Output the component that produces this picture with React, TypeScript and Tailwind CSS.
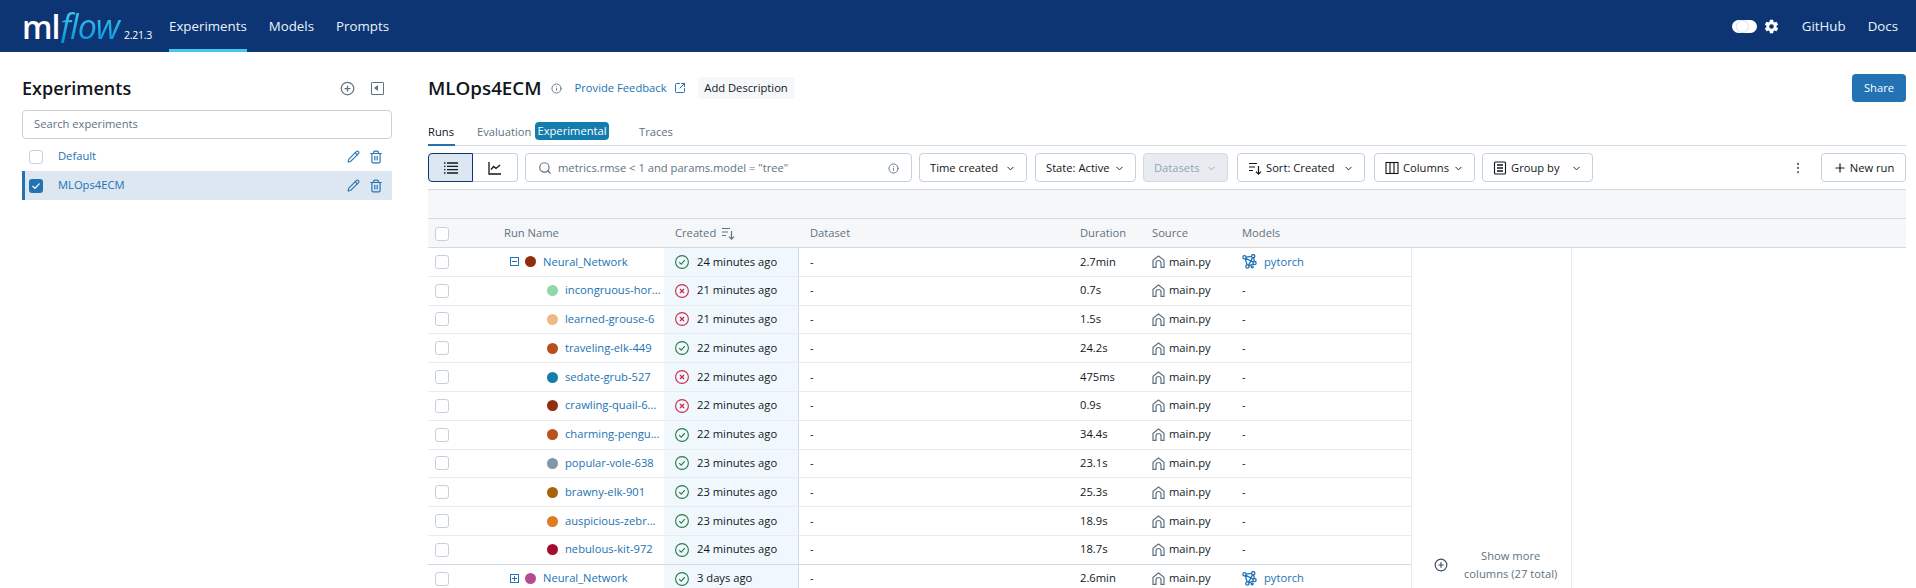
import { ChevronDown, CirclePlus, Info, MoreVertical, Pencil, Plus, Search, SquareArrowOutUpRight, Trash2 } from "lucide-react";
import { IoSettingsSharp } from "react-icons/io5";

interface Run {
  name: string;
  color: string;
  created: string;
  ok: boolean;
  duration: string;
  parent?: "open" | "closed";
  last?: boolean;
}

const runs: Run[] = [
  { name: "Neural_Network", color: "#8f2f0e", created: "24 minutes ago", ok: true, duration: "2.7min", parent: "open" },
  { name: "incongruous-hor...", color: "#8fd9a8", created: "21 minutes ago", ok: false, duration: "0.7s" },
  { name: "learned-grouse-6", color: "#efb985", created: "21 minutes ago", ok: false, duration: "1.5s" },
  { name: "traveling-elk-449", color: "#b9501c", created: "22 minutes ago", ok: true, duration: "24.2s" },
  { name: "sedate-grub-527", color: "#137dae", created: "22 minutes ago", ok: false, duration: "475ms" },
  { name: "crawling-quail-6...", color: "#8f2f0e", created: "22 minutes ago", ok: false, duration: "0.9s" },
  { name: "charming-pengu...", color: "#be501e", created: "22 minutes ago", ok: true, duration: "34.4s" },
  { name: "popular-vole-638", color: "#8396a7", created: "23 minutes ago", ok: true, duration: "23.1s" },
  { name: "brawny-elk-901", color: "#a6630c", created: "23 minutes ago", ok: true, duration: "25.3s" },
  { name: "auspicious-zebr...", color: "#e07b20", created: "23 minutes ago", ok: true, duration: "18.9s" },
  { name: "nebulous-kit-972", color: "#a30d32", created: "24 minutes ago", ok: true, duration: "18.7s", last: true },
  { name: "Neural_Network", color: "#b34d93", created: "3 days ago", ok: true, duration: "2.6min", parent: "closed" },
];

function Box({ className = "" }: { className?: string }) {
  return <span className={`block h-[14px] w-[14px] rounded-[3px] border border-[#c5d1dd] bg-white ${className}`} />;
}

function ListIcon() {
  return (
    <svg width="16" height="16" viewBox="0 0 16 16" fill="none" stroke="#11171c" strokeWidth="1.3">
      <path d="M4 3h11M4 6.3h11M4 9.7h11M4 13h11M1 3h1.5M1 6.3h1.5M1 9.7h1.5M1 13h1.5" />
    </svg>
  );
}

function ChartIcon() {
  return (
    <svg width="14" height="14" viewBox="0 0 14 14" fill="none" stroke="#11171c" strokeWidth="1.3">
      <path d="M1 1v12h12" />
      <path d="M3 8.5l2.7-3 2.3 2 4-3.5" />
    </svg>
  );
}

function SortIcon({ color = "#11171c" }: { color?: string }) {
  return (
    <svg width="14" height="14" viewBox="0 0 14 14" fill="none" stroke={color} strokeWidth="1.2">
      <path d="M1 2.5h8M1 6h6M1 9.5h4M10.5 5v8M8 10.6l2.5 2.5 2.5-2.5" />
    </svg>
  );
}

function ColumnsIcon() {
  return (
    <svg width="14" height="14" viewBox="0 0 14 14" fill="none" stroke="#11171c" strokeWidth="1.1">
      <rect x="1" y="1.5" width="12" height="11" />
      <path d="M5 1.5v11M9 1.5v11" />
    </svg>
  );
}

function GroupIcon() {
  return (
    <svg width="14" height="14" viewBox="0 0 14 14" fill="none" stroke="#11171c" strokeWidth="1.1">
      <rect x="1.5" y="1" width="11" height="12" rx="1" />
      <path d="M4 4h6M4 7h6M4 10h6" strokeWidth="1.5" />
    </svg>
  );
}

function HomeIcon() {
  return (
    <svg width="13" height="13" viewBox="0 0 13 13" fill="none" stroke="#5f7281" strokeWidth="1.2">
      <path d="M1 12.4V5.2L6.5 1 12 5.2v7.2H9V8a2.5 2.5 0 0 0-5 0v4.4z" />
    </svg>
  );
}

function ModelIcon() {
  return (
    <svg width="15" height="15" viewBox="0 0 14 14" fill="none" stroke="#2272b4" strokeWidth="1.2">
      <circle cx="2.3" cy="3" r="1.5" />
      <circle cx="10.5" cy="2" r="1.5" />
      <circle cx="11.7" cy="8.5" r="1.5" />
      <circle cx="5" cy="11.7" r="1.5" />
      <circle cx="9.5" cy="12" r="1" />
      <path d="M3.8 3l5.2-.8M3 4.3l1.8 6M9.9 3.4L6 10.6M10.9 3.5l.6 3.5M10.3 9.3l-4 1.8M3.5 4l6.8 3.6" />
    </svg>
  );
}

function StatusIcon({ ok }: { ok: boolean }) {
  const color = ok ? "#277c43" : "#c82d4c";
  return (
    <svg width="14" height="14" viewBox="0 0 14 14" fill="none" stroke={color} strokeWidth="1.1" className="shrink-0">
      <circle cx="7" cy="7" r="6.4" />
      {ok ? <path d="M4.2 7.2l2 1.9 3.6-3.9" /> : <path d="M5 5l4 4M9 5l-4 4" strokeWidth="1.3" />}
    </svg>
  );
}

function ToolButton({ label, width, disabled, icon }: { label: string; width: string; disabled?: boolean; icon?: React.ReactNode }) {
  return (
    <button className={`flex h-[29px] shrink-0 items-center justify-between rounded border px-[10px] pt-px ${width} ${disabled ? "border-[#d1d9e1] bg-[#e8ecf0] text-[#92a4b3]" : "border-[#c5d1dd] bg-white text-[#11171c]"}`}>
      <span className="flex items-center gap-1 whitespace-nowrap">
        {icon}
        {label}
      </span>
      <ChevronDown size={11} />
    </button>
  );
}

function RunRow({ run }: { run: Run }) {
  return (
    <div className={`flex h-[28.8px] items-center border-b ${run.last ? "border-[#d1d9e1]" : "border-[#e8ecf0]"}`}>
      <div className="w-[76px] shrink-0 pl-[7px]">
        <Box />
      </div>
      <div className="flex w-[160px] shrink-0 items-center">
        {run.parent ? (
          <div className="flex items-center pl-[6px]">
            <span className="relative mr-[6px] block h-[9px] w-[9px] border border-[#2272b4]">
              <span className="absolute left-[1px] top-[3px] h-px w-[5px] bg-[#2272b4]" />
              {run.parent === "closed" && <span className="absolute left-[3px] top-[1px] h-[5px] w-px bg-[#2272b4]" />}
            </span>
            <span className="mr-[7px] block h-[11px] w-[11px] rounded-full" style={{ backgroundColor: run.color }} />
            <span className="whitespace-nowrap text-[#2272b4]">{run.name}</span>
          </div>
        ) : (
          <div className="flex items-center pl-[43px]">
            <span className="mr-[7px] block h-[11px] w-[11px] shrink-0 rounded-full" style={{ backgroundColor: run.color }} />
            <span className="whitespace-nowrap text-[#2272b4]">{run.name}</span>
          </div>
        )}
      </div>
      <div className="flex h-full w-[135px] shrink-0 items-center gap-[8px] border-r border-[#d1d9e1] bg-[#f0f7fd] pl-[11px] text-[#11171c]">
        <StatusIcon ok={run.ok} />
        <span className="whitespace-nowrap">{run.created}</span>
      </div>
      <div className="w-[281px] shrink-0 pl-[11px] text-[#11171c]">-</div>
      <div className="w-[72px] shrink-0 text-[#11171c]">{run.duration}</div>
      <div className="flex w-[90px] shrink-0 items-center gap-[4px] text-[#11171c]">
        <HomeIcon />
        main.py
      </div>
      <div className="flex flex-1 items-center gap-[7px] text-[#11171c]">
        {run.parent ? (
          <>
            <ModelIcon />
            <span className="text-[#2272b4]">pytorch</span>
          </>
        ) : (
          "-"
        )}
      </div>
    </div>
  );
}

export default function App() {
  return (
    <div className="flex h-[588px] flex-col overflow-hidden bg-white font-['Open_Sans','Noto_Sans',sans-serif] text-[11.2px] text-[#11171c]">
      {/* top bar */}
      <div className="flex h-[52px] shrink-0 items-center bg-[#0e3573] pl-[22px] pr-[18px] text-white">
        <div className="flex w-[147px] shrink-0 items-baseline">
          <span className="text-[32px] font-semibold leading-none tracking-[-1px]">ml</span>
          <span className="ml-[1px] bg-gradient-to-b from-[#43c9ed] to-[#0194e2] bg-clip-text pr-[4px] text-[34px] italic leading-none tracking-[-1px] text-transparent">flow</span>
          <span className="ml-[1px] text-[10.5px] tracking-[-0.3px]">2.21.3</span>
        </div>
        <div className="flex h-full items-center gap-[22px] pt-px text-[13.3px] text-[#e8f4fb]">
          <span className="flex h-full items-center border-b-[3px] border-[#43c9ed] pt-[3px]">Experiments</span>
          <span>Models</span>
          <span>Prompts</span>
        </div>
        <div className="ml-auto flex items-center pt-px text-[13.3px] text-[#e8f4fb]">
          <span className="relative block h-[13px] w-[25px] rounded-full bg-white">
            <span className="absolute right-[8px] top-0 h-[13px] w-[13px] rounded-full border border-[#d5dfe8] bg-white" />
          </span>
          <IoSettingsSharp size={15} className="ml-[7px] text-white" />
          <span className="ml-[23px]">GitHub</span>
          <span className="ml-[22px]">Docs</span>
        </div>
      </div>

      <div className="flex min-h-0 flex-1">
        {/* sidebar */}
        <div className="w-[428px] shrink-0 pl-[22px] pr-[36px] pt-[24px]">
          <div className="flex h-[24px] items-center justify-between pr-[8px]">
            <span className="text-[18px] font-semibold leading-none">Experiments</span>
            <div className="flex items-center gap-[16px] text-[#5f7281]">
              <CirclePlus size={15} />
              <span className="relative block h-[13px] w-[13px] rounded-[1px] border-[1.5px] border-[#5f7281]">
                <span className="absolute left-[2px] top-[2px] h-0 w-0 border-y-[3px] border-r-[4px] border-y-transparent border-r-[#5f7281]" />
              </span>
            </div>
          </div>
          <div className="mt-[10px] flex h-[29px] items-center rounded border border-[#c5d1dd] pl-[11px] text-[#5f7281]">Search experiments</div>
          <div className="mt-[3px]">
            <div className="flex h-[29px] items-center pl-[7px] text-[#2272b4]">
              <Box />
              <span className="ml-[15px]">Default</span>
              <Pencil size={13} className="ml-auto" />
              <Trash2 size={14} className="ml-[9px] mr-[9px]" />
            </div>
            <div className="flex h-[29px] items-center border-l-[3px] border-[#2272b4] bg-[#dce7f2] pl-[4px] text-[#2272b4]">
              <span className="flex h-[14px] w-[14px] items-center justify-center rounded-[3px] bg-[#2272b4]">
                <svg width="10" height="10" viewBox="0 0 10 10" fill="none" stroke="white" strokeWidth="1.2">
                  <path d="M1.5 5l2.5 2.5 4.5-5" />
                </svg>
              </span>
              <span className="ml-[15px]">MLOps4ECM</span>
              <Pencil size={13} className="ml-auto" />
              <Trash2 size={14} className="ml-[9px] mr-[9px]" />
            </div>
          </div>
        </div>

        {/* main */}
        <div className="flex min-w-0 flex-1 flex-col pr-[10px]">
          <div className="flex h-[43px] shrink-0 items-start justify-between pt-[22px]">
            <div className="flex h-[28px] items-center">
              <span className="text-[18.8px] font-semibold leading-none">MLOps4ECM</span>
              <Info size={11} className="ml-[9px] text-[#5f7281]" />
              <span className="ml-[13px] text-[#2272b4]">Provide Feedback</span>
              <SquareArrowOutUpRight size={12} className="ml-[7px] text-[#2272b4]" />
              <span className="ml-[12px] flex h-[22px] w-[97px] items-center justify-center rounded bg-[#f5f7f9]">Add Description</span>
            </div>
            <button className="flex h-[28px] w-[54px] items-center justify-center rounded bg-[#2272b4] text-white">Share</button>
          </div>

          <div className="mt-[21px] flex h-[30px] shrink-0 items-start border-b border-[#d1d9e1] leading-[18px] text-[#5f7281]">
            <span className="h-[30px] w-[27px] border-b-[2px] border-[#2272b4] pt-[7px] font-medium text-[#11171c]">Runs</span>
            <span className="ml-[22px] w-[54px] whitespace-nowrap pt-[7px]">Evaluation</span>
            <span className="ml-[4px] mt-[6px] flex h-[18px] w-[74px] items-center justify-center rounded bg-[#137dae] text-white">Experimental</span>
            <span className="ml-[30px] pt-[7px]">Traces</span>
          </div>

          {/* toolbar */}
          <div className="flex h-[43px] shrink-0 items-center">
            <span className="flex h-[29px] w-[45px] items-center justify-center rounded-l border border-[#0e3573] bg-[#dce7f2]">
              <ListIcon />
            </span>
            <span className="flex h-[29px] w-[45px] items-center justify-center rounded-r border border-l-0 border-[#c5d1dd]">
              <ChartIcon />
            </span>
            <div className="ml-[7px] flex h-[29px] w-[387px] items-center rounded border border-[#c5d1dd] px-[12px] pt-px text-[#5f7281]">
              <Search size={14} className="mr-[6px]" />
              <span>metrics.rmse &lt; 1 and params.model = "tree"</span>
              <Info size={11} className="ml-auto" />
            </div>
            <div className="ml-[7px] flex">
              <ToolButton label="Time created" width="w-[108px]" />
              <span className="w-[8px]" />
              <ToolButton label="State: Active" width="w-[101px]" />
              <span className="w-[7px]" />
              <ToolButton label="Datasets" width="w-[85px]" disabled />
              <span className="w-[9px]" />
              <ToolButton label="Sort: Created" width="w-[128px]" icon={<SortIcon />} />
              <span className="w-[9px]" />
              <ToolButton label="Columns" width="w-[101px]" icon={<ColumnsIcon />} />
              <span className="w-[7px]" />
              <ToolButton label="Group by" width="w-[111px]" icon={<GroupIcon />} />
            </div>
            <MoreVertical size={14} className="ml-auto text-[#5f7281]" />
            <button className="ml-[16px] flex h-[29px] w-[85px] items-center justify-center gap-[3px] rounded border border-[#c5d1dd] pt-px">
              <Plus size={14} />
              New run
            </button>
          </div>

          {/* table */}
          <div className="h-[30px] shrink-0 border-y border-[#d1d9e1] bg-[#f5f7f9]" />
          <div className="flex h-[29px] shrink-0 items-center border-b border-[#d1d9e1] bg-[#f5f7f9] pt-px text-[#5f7281]">
            <div className="w-[76px] shrink-0 pl-[7px]">
              <Box className="bg-transparent" />
            </div>
            <div className="w-[160px] shrink-0">Run Name</div>
            <div className="flex w-[135px] shrink-0 items-center gap-[5px] pl-[11px]">
              Created
              <SortIcon color="#5f7281" />
            </div>
            <div className="w-[281px] shrink-0 pl-[11px]">Dataset</div>
            <div className="w-[72px] shrink-0">Duration</div>
            <div className="w-[90px] shrink-0">Source</div>
            <div>Models</div>
          </div>
          <div className="flex min-h-0 flex-1">
            <div className="w-[983px] shrink-0">
              {runs.map((run, idx) => (
                <RunRow key={idx} run={run} />
              ))}
            </div>
            <div className="flex w-[161px] shrink-0 items-end border-x border-[#e8ecf0] pb-[5px] pl-[22px] text-[#5f7281]">
              <div className="flex items-center">
                <CirclePlus size={14} className="mr-[16px] shrink-0 text-[#3d4f5e]" />
                <span className="whitespace-nowrap text-center leading-[18px]">
                  Show more
                  <br />
                  columns (27 total)
                </span>
              </div>
            </div>
          </div>
        </div>
      </div>
    </div>
  );
}
